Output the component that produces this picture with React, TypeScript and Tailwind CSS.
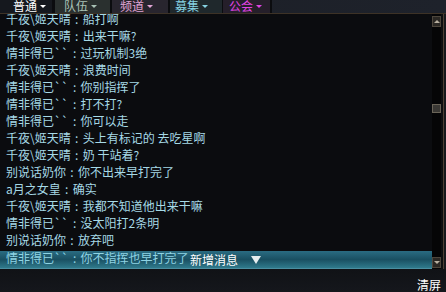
const tabs = [
  { label: "普通", w: "w-[52px]", pl: "pl-[13px]", text: "text-white", arrow: "border-t-white", bg: "bg-[#15181e]" },
  { label: "队伍", w: "w-[55px]", pl: "pl-[9px]", text: "text-[#a9c2b6]", arrow: "border-t-[#a9c2b6]", bg: "bg-[#2a302f]" },
  { label: "频道", w: "w-[56px]", pl: "pl-[8px]", text: "text-[#e2a6d6]", arrow: "border-t-[#e2a6d6]", bg: "bg-[#28252e]" },
  { label: "募集", w: "w-[52px]", pl: "pl-[5px]", text: "text-[#86d2e2]", arrow: "border-t-[#86d2e2]", bg: "bg-[#1f282c]" },
  { label: "公会", w: "w-[47px]", pl: "pl-[6px]", text: "text-[#e044e4]", arrow: "border-t-[#e044e4]", bg: "bg-[#251f2a]" },
];

const messages = [
  ["千夜\\姬天晴", "船打啊"],
  ["千夜\\姬天晴", "出来干嘛?"],
  ["情非得已``", "过玩机制3绝"],
  ["千夜\\姬天晴", "浪费时间"],
  ["情非得已``", "你别指挥了"],
  ["情非得已``", "打不打?"],
  ["情非得已``", "你可以走"],
  ["千夜\\姬天晴", "头上有标记的 去吃星啊"],
  ["千夜\\姬天晴", "奶 干站着?"],
  ["别说话奶你", "你不出来早打完了"],
  ["a月之女皇", "确实"],
  ["千夜\\姬天晴", "我都不知道他出来干嘛"],
  ["情非得已``", "没太阳打2条明"],
  ["别说话奶你", "放弃吧"],
  ["情非得已``", "你不指挥也早打完了"],
];

const font = { fontFamily: '"Noto Sans CJK SC", "Noto Sans", sans-serif' };

function ScrollButton({ down }: { down?: boolean }) {
  return (
    <div className="h-[11px] w-[9px] bg-[#2a2723] border border-[#4d463c] flex items-center justify-center">
      <div
        className={
          down
            ? "w-0 h-0 border-l-[3px] border-r-[3px] border-t-[3px] border-l-transparent border-r-transparent border-t-[#b8b0a0]"
            : "w-0 h-0 border-l-[3px] border-r-[3px] border-b-[3px] border-l-transparent border-r-transparent border-b-[#b8b0a0]"
        }
      />
    </div>
  );
}

export default function App() {
  return (
    <div className="w-[446px] h-[292px] flex flex-col bg-[#121418] overflow-hidden" style={font}>
      {/* tab bar */}
      <div className="h-[13px] flex bg-gradient-to-r from-[#1b1e25] to-[#1e222b]">
        {tabs.map((t, i) => (
          <div key={i} className="flex">
            <div className={`${t.w} ${t.pl} ${t.bg} h-[13px] flex items-start`}>
              <span className={`${t.text} text-[12px] leading-[12px]`}>{t.label}</span>
              <span className={`ml-[3px] mt-[5px] w-0 h-0 border-l-[3px] border-r-[3px] border-t-[3px] border-l-transparent border-r-transparent ${t.arrow}`} />
            </div>
            <div className={i === 3 ? "w-[1px] bg-[#0b0c0f]" : i === 0 ? "w-[3px] bg-[#0b0c0f]" : "w-[2px] bg-[#0b0c0f]"} />
          </div>
        ))}
      </div>
      <div className="h-[1px] bg-[#3d3226]" />

      {/* chat panel */}
      <div className="h-[256px] flex bg-[#0b0c0f]">
        <div className="relative flex-1 overflow-hidden">
          <div className="absolute left-0 right-0 bottom-0 h-[18px] bg-gradient-to-b from-[#2a6c82] via-[#1a5062] to-[#2f7a8c] border-b border-[#4a8ea0]" />
          <div className="relative -mt-[4px] pl-[6px] text-[12px] leading-[17px] text-[#a6d9e6]">
            {messages.map(([name, msg], i) => (
              <div key={i} className={i === messages.length - 1 ? "whitespace-nowrap flex mt-[1px] text-[#8fd4e4]" : "whitespace-nowrap flex"}>
                <span>{name}</span>
                <span className="w-[12px] text-center">:</span>
                <span>{msg}</span>
              </div>
            ))}
          </div>
          <div className="absolute left-[190px] bottom-[1px] flex items-center gap-[13px]">
            <span className="text-white text-[12px] leading-[16px]">新增消息</span>
            <span className="w-0 h-0 border-l-[5px] border-r-[5px] border-t-[8px] border-l-transparent border-r-transparent border-t-[#e6eef0]" />
          </div>
        </div>
        <div className="w-[9px] bg-[#050506] flex flex-col pt-[2px] pb-[1px]">
          <ScrollButton />
          <div className="flex-1 pt-[77px]">
            <div className="h-[9px] w-[9px] bg-[#3a3834] border border-[#6a6458]" />
          </div>
          <ScrollButton down />
        </div>
        <div className="w-[2px] bg-[#0d0e10]" />
        <div className="w-[1px] bg-[#4e4034]" />
        <div className="w-[2px] bg-[#16181c]" />
      </div>

      {/* footer */}
      <div className="flex-1 flex justify-end pr-[5px] pt-[9px] bg-gradient-to-b from-[#101216] to-[#15171c]">
        <span className="text-white text-[12px] leading-[14px]">清屏</span>
      </div>
    </div>
  );
}
